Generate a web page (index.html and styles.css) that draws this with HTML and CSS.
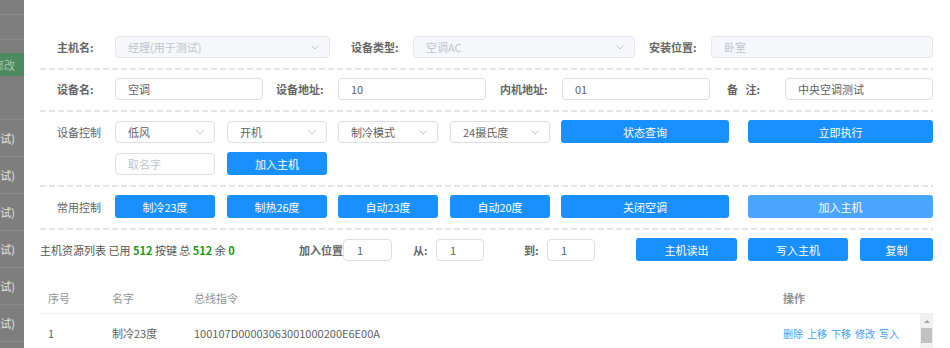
FILE: index.html
```html
<!DOCTYPE html>
<html lang="zh-CN">
<head>
  <meta charset="UTF-8">
  <title>设备编辑</title>
  <link rel="stylesheet" href="styles.css">
</head>
<body>
  <div class="page">
    <!-- page behind the dialog, under the mask -->
    <div class="backdrop">
      <div class="bk-row bk-a"></div>
      <div class="bk-row bk-b"></div>
      <div class="bk-gap"></div>
      <div class="bk-btn"><span>修改</span></div>
      <div class="bk-row bk-c"></div>
      <div class="bk-row"><span>经理(用于测试)</span></div>
      <div class="bk-row"><span>经理(用于测试)</span></div>
      <div class="bk-row"><span>经理(用于测试)</span></div>
      <div class="bk-row"><span>经理(用于测试)</span></div>
      <div class="bk-row"><span>经理(用于测试)</span></div>
      <div class="bk-row"><span>经理(用于测试)</span></div>
      <div class="bk-row"></div>
    </div>

    <div class="dialog">
      <div class="form-row">
        <label class="lbl w58">主机名:</label>
        <div class="select disabled w215">
          <input type="text" value="经理(用于测试)" readonly>
          <svg class="arrow" width="8" height="5" viewBox="0 0 8 5"><polyline points="0.5,0.5 4,4 7.5,0.5" fill="none" stroke="#c0c4cc" stroke-width="1"/></svg>
        </div>
        <label class="lbl w62 ml21">设备类型:</label>
        <div class="select disabled w222">
          <input type="text" value="空调AC" readonly>
          <svg class="arrow" width="8" height="5" viewBox="0 0 8 5"><polyline points="0.5,0.5 4,4 7.5,0.5" fill="none" stroke="#c0c4cc" stroke-width="1"/></svg>
        </div>
        <label class="lbl w62 ml14">安装位置:</label>
        <input class="inp disabled w222" type="text" value="卧室" readonly>
      </div>
      <div class="sep"></div>

      <div class="form-row">
        <label class="lbl w58">设备名:</label>
        <input class="inp w148" type="text" value="空调">
        <label class="lbl w62 ml13">设备地址:</label>
        <input class="inp w148" type="text" value="10">
        <label class="lbl w62 ml14">内机地址:</label>
        <input class="inp w148" type="text" value="01">
        <label class="lbl w58 ml17">备&nbsp;&nbsp;&nbsp;注:</label>
        <input class="inp w148" type="text" value="中央空调测试">
      </div>
      <div class="sep"></div>

      <div class="form-row">
        <span class="lbl plain w58">设备控制</span>
        <div class="select w100">
          <input type="text" value="低风" readonly>
          <svg class="arrow" width="8" height="5" viewBox="0 0 8 5"><polyline points="0.5,0.5 4,4 7.5,0.5" fill="none" stroke="#c0c4cc" stroke-width="1"/></svg>
        </div>
        <div class="select w100 ml12">
          <input type="text" value="开机" readonly>
          <svg class="arrow" width="8" height="5" viewBox="0 0 8 5"><polyline points="0.5,0.5 4,4 7.5,0.5" fill="none" stroke="#c0c4cc" stroke-width="1"/></svg>
        </div>
        <div class="select w100 ml11">
          <input type="text" value="制冷模式" readonly>
          <svg class="arrow" width="8" height="5" viewBox="0 0 8 5"><polyline points="0.5,0.5 4,4 7.5,0.5" fill="none" stroke="#c0c4cc" stroke-width="1"/></svg>
        </div>
        <div class="select w100 ml12">
          <input type="text" value="24摄氏度" readonly>
          <svg class="arrow" width="8" height="5" viewBox="0 0 8 5"><polyline points="0.5,0.5 4,4 7.5,0.5" fill="none" stroke="#c0c4cc" stroke-width="1"/></svg>
        </div>
        <button class="btn w168 ml11">状态查询</button>
        <button class="btn w185 ml19">立即执行</button>
      </div>
      <div class="form-row second">
        <span class="lbl w58"></span>
        <input class="inp w100" type="text" placeholder="取名字">
        <button class="btn w100 ml12">加入主机</button>
      </div>
      <div class="sep"></div>

      <div class="form-row">
        <span class="lbl plain w58">常用控制</span>
        <button class="btn w100">制冷23度</button>
        <button class="btn w100 ml12">制热26度</button>
        <button class="btn w100 ml11">自动23度</button>
        <button class="btn w100 ml12">自动20度</button>
        <button class="btn w168 ml11">关闭空调</button>
        <button class="btn light w185 ml19">加入主机</button>
      </div>
      <div class="sep"></div>

      <div class="tools-row">
        <span class="stats">主机资源列表 已用 <b>512</b> 按键 总 <b>512</b> 余 <b>0</b></span>
        <label class="lbl w44">加入位置</label>
        <input class="inp small w49" type="text" value="1">
        <label class="lbl w23 ml21">从:</label>
        <input class="inp small w48" type="text" value="1">
        <label class="lbl w23 ml40">到:</label>
        <input class="inp small w48" type="text" value="1">
        <button class="btn w101 ml41">主机读出</button>
        <button class="btn w100 ml11">写入主机</button>
        <button class="btn w73 ml12">复制</button>
      </div>

      <div class="table">
        <div class="thead">
          <div>序号</div>
          <div>名字</div>
          <div>总线指令</div>
          <div class="strong">操作</div>
        </div>
        <div class="tbody">
          <div class="trow">
            <div>1</div>
            <div>制冷23度</div>
            <div>100107D00003063001000200E6E00A</div>
            <div class="ops"><a>删除</a><a>上移</a><a>下移</a><a>修改</a><a>写入</a></div>
          </div>
          <div class="scrollbar">
            <div class="sb-up"></div>
            <div class="sb-thumb"></div>
          </div>
        </div>
      </div>
    </div>
  </div>
</body>
</html>
```

FILE: styles.css
```css
body {
  margin: 0;
  font-family: "Noto Sans CJK SC", "Liberation Sans", sans-serif;
  font-size: 11px;
  color: #606266;
}
.page {
  display: flex;
  height: 348px;
  overflow: hidden;
}

/* masked page behind the dialog */
.backdrop {
  width: 24px;
  flex-shrink: 0;
  background: #7e7e7e;
  overflow: hidden;
}
.bk-row {
  display: flex;
  justify-content: flex-end;
  align-items: center;
  height: 36px;
  padding-right: 9px;
  border-bottom: 1px solid #8b8b8b;
  color: #e2e2e2;
  white-space: nowrap;
}
.bk-a { height: 14px; }
.bk-b { height: 24px; }
.bk-c { height: 43px; }
.bk-gap { height: 13px; }
.bk-btn {
  display: flex;
  justify-content: flex-end;
  align-items: center;
  height: 23px;
  padding-right: 9px;
  background: #4c8a5f;
  color: #a9c4b1;
  white-space: nowrap;
}

.dialog {
  flex: 1;
  background: #fff;
  padding: 36px 17px 0 16px;
}

.form-row {
  display: flex;
  align-items: center;
  padding-left: 17px;
}
.form-row.second { margin-top: 9px; }
.sep {
  height: 2px;
  margin: 10px 0 8px;
  background: repeating-linear-gradient(to right, #e4e4e4 0 6px, transparent 6px 9px);
}

.lbl {
  flex-shrink: 0;
  font-weight: bold;
  color: #666;
  white-space: nowrap;
}
.lbl.plain {
  font-weight: normal;
  color: #606266;
}

.inp, .select input {
  box-sizing: border-box;
  height: 22px;
  padding: 0 12px;
  border: 1px solid #dcdfe6;
  border-radius: 4px;
  font-family: inherit;
  font-size: 11px;
  color: #606266;
  background: #fff;
  outline: none;
}
.inp::placeholder { color: #c0c4cc; }
.inp.small { padding: 0 13px; }
.inp.disabled, .select.disabled input {
  background: #f5f7fa;
  border-color: #e4e7ed;
  color: #c0c4cc;
}
.select {
  position: relative;
  flex-shrink: 0;
}
.select input {
  width: 100%;
  display: block;
}
.select .arrow {
  position: absolute;
  right: 11px;
  top: 9px;
}

.btn {
  flex-shrink: 0;
  height: 23px;
  border: none;
  border-radius: 3px;
  background: #1890ff;
  color: #fff;
  font-family: inherit;
  font-size: 11px;
  cursor: pointer;
}
.btn.light { background: #4aa5ff; }

.tools-row {
  display: flex;
  align-items: center;
  height: 23px;
}
.stats {
  width: 259px;
  flex-shrink: 0;
  white-space: nowrap;
  color: #555;
}
.stats b { color: #1a9a1a; }

/* widths & gaps */
.w23 { width: 23px; }
.w44 { width: 44px; }
.w48 { width: 48px; }
.w49 { width: 49px; }
.w58 { width: 58px; }
.w62 { width: 62px; }
.w73 { width: 73px; }
.w100 { width: 100px; }
.w101 { width: 101px; }
.w148 { width: 148px; }
.w168 { width: 168px; }
.w185 { width: 185px; }
.w215 { width: 215px; }
.w222 { width: 222px; }
.ml11 { margin-left: 11px; }
.ml12 { margin-left: 12px; }
.ml13 { margin-left: 13px; }
.ml14 { margin-left: 14px; }
.ml17 { margin-left: 17px; }
.ml19 { margin-left: 19px; }
.ml21 { margin-left: 21px; }
.ml40 { margin-left: 40px; }
.ml41 { margin-left: 41px; }

/* table */
.table { margin-top: 21px; }
.thead, .trow {
  display: grid;
  grid-template-columns: 64px 82px 589px 1fr;
  align-items: center;
}
.thead > div, .trow > div { padding-left: 8px; white-space: nowrap; }
.thead {
  height: 31px;
  border-bottom: 1px solid #ebeef5;
  color: #909399;
}
.thead .strong { font-weight: bold; }
.tbody { display: flex; }
.trow {
  flex: 1;
  height: 38px;
  border-bottom: 1px solid #ebeef5;
}
.ops a {
  color: #409eff;
  font-size: 10px;
  margin-right: 4px;
  cursor: pointer;
}
.scrollbar {
  width: 13px;
  height: 40px;
  background: #f1f1f1;
}
.sb-up {
  height: 14px;
  display: flex;
  align-items: center;
  justify-content: center;
}
.sb-up::before {
  content: "";
  border-left: 3px solid transparent;
  border-right: 3px solid transparent;
  border-bottom: 3px solid #a3a3a3;
}
.sb-thumb {
  height: 15px;
  margin: 0 1px;
  background: #c1c1c1;
}
```
